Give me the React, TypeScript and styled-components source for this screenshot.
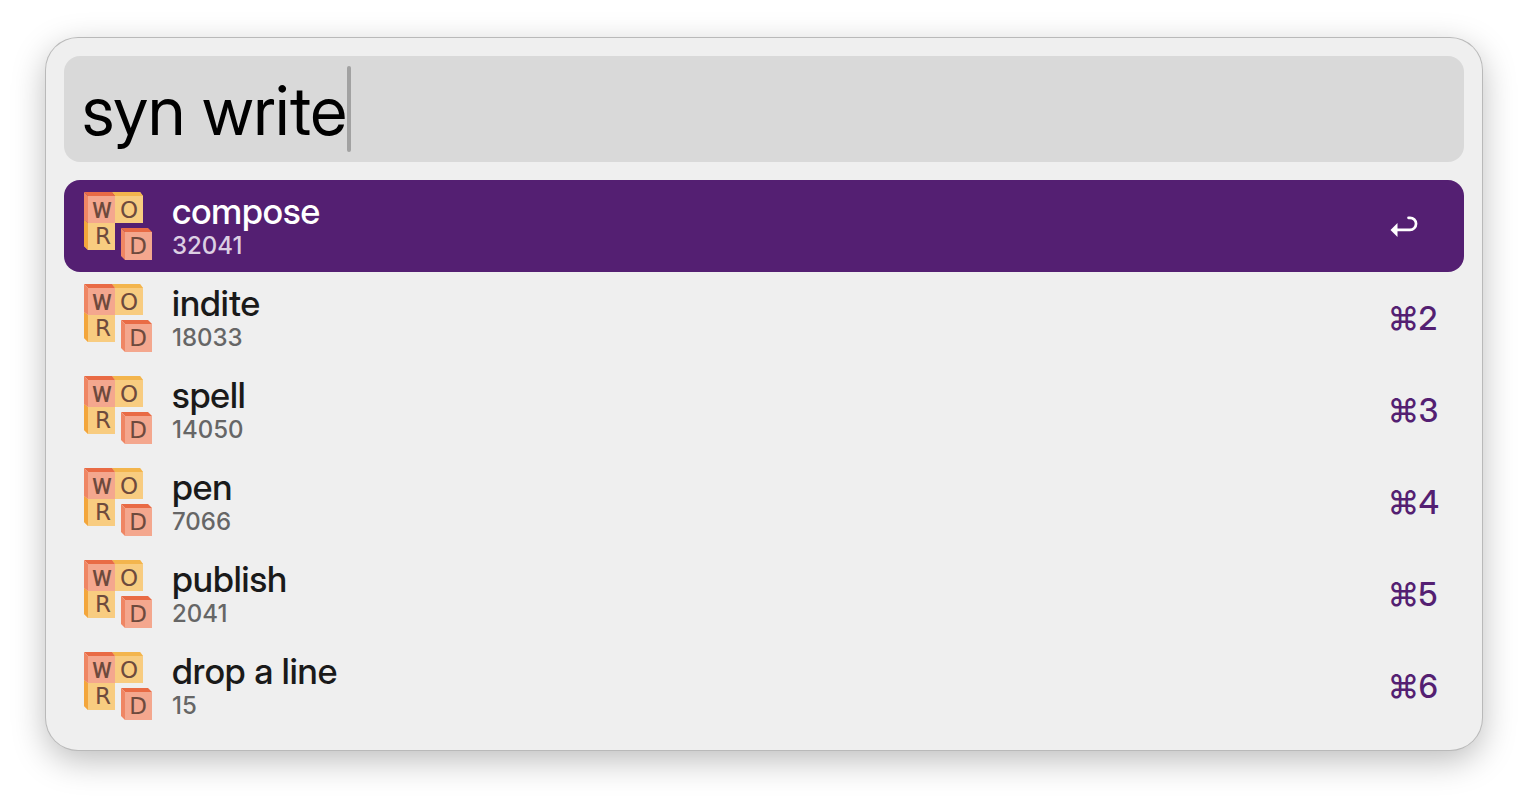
import React, { useState } from "react";
import styled, { createGlobalStyle } from "styled-components";

const GlobalStyle = createGlobalStyle`
  * { box-sizing: border-box; }
  body {
    margin: 0;
    background: #ffffff;
    font-family: "Inter Display", Inter, "Liberation Sans", sans-serif;
  }
`;

const Page = styled.main`
  padding: 38px 46px 54px;
`;

const Panel = styled.section`
  display: flex;
  flex-direction: column;
  gap: 18px;
  padding: 18px;
  border-radius: 32px;
  background: #efefef;
  box-shadow: 0 0 0 1px #b9b9b9, 0 10px 34px rgba(0, 0, 0, 0.27);
`;

const SearchBar = styled.div`
  display: flex;
  align-items: center;
  height: 106px;
  padding: 0 18px;
  border-radius: 16px;
  background: #d9d9d9;
`;

const SearchInput = styled.input`
  field-sizing: content;
  max-width: 100%;
  height: 88px;
  padding: 2px 0 0;
  border: 0;
  outline: 0;
  background: transparent;
  color: #000000;
  caret-color: transparent;
  font-family: inherit;
  font-size: 68px;
  font-weight: 400;
`;

const Caret = styled.span`
  width: 4px;
  height: 86px;
  border-radius: 2px;
  background: #a2a2a2;
`;

const Results = styled.ul`
  margin: 0;
  padding: 0;
  list-style: none;
`;

const ResultButton = styled.button<{ $selected: boolean }>`
  display: flex;
  align-items: center;
  gap: 20px;
  width: 100%;
  height: 92px;
  padding: 0 28px 0 20px;
  border: 0;
  border-radius: 16px;
  background: ${(p) => (p.$selected ? "#541f72" : "transparent")};
  color: ${(p) => (p.$selected ? "#ffffff" : "#1a1a1a")};
  font-family: inherit;
  text-align: left;
`;

const Labels = styled.span`
  display: flex;
  flex: 1;
  flex-direction: column;
`;

const Title = styled.span`
  font-size: 36px;
  font-weight: 500;
  line-height: 40px;
`;

const Subtitle = styled.span<{ $selected: boolean }>`
  color: ${(p) => (p.$selected ? "#dccfe3" : "#666666")};
  font-family: Inter, "Liberation Sans", sans-serif;
  font-size: 24px;
  font-weight: 450;
  line-height: 30px;
`;

const Shortcut = styled.span`
  display: flex;
  width: 48px;
  padding-top: 2px;
  color: #541f72;
  font-size: 32px;
  font-weight: 500;
  line-height: 40px;
`;

const Tiles = styled.svg`
  flex: none;
  width: 68px;
  height: 68px;
`;

function WordIcon() {
  return (
    <Tiles viewBox="0 0 68 68" aria-hidden="true">
      <path d="M28 0H56L59 4V31H31V4Z" fill="#f8cc80" />
      <path d="M28 0H56L59 4H31Z" fill="#f3b54d" />
      <path d="M0 28L4 31H31V58H4L0 54Z" fill="#f8cc80" />
      <path d="M0 28L4 31V58L0 54Z" fill="#f3a63c" />
      <path d="M4 4H31V31H4Z" fill="#f4a78e" />
      <path d="M0 0H28L31 4H4Z" fill="#e96b45" />
      <path d="M0 0L4 4V31L0 28Z" fill="#ef8664" />
      <path d="M41 40H68V68H41Z" fill="#f4a78e" />
      <path d="M37 36H64L68 40H41Z" fill="#e96b45" />
      <path d="M37 36L41 40V68L37 64Z" fill="#ef8664" />
      <g fill="#6e4a3d" fontFamily='"DejaVu Sans", sans-serif' textAnchor="middle">
        <text x="18" y="26" fontSize="22" fontWeight="500" fontFamily="Roboto, sans-serif">W</text>
        <text x="45" y="26" fontSize="23">O</text>
        <text x="19" y="52" fontSize="23">R</text>
        <text x="54" y="62" fontSize="23">D</text>
      </g>
    </Tiles>
  );
}

function ReturnIcon() {
  return (
    <svg width="30" height="22" viewBox="-2 0 30 22" aria-label="Return">
      <path d="M18.5 1.8H20A6 6 0 0 1 20 13.9H7" fill="none" stroke="#ffffff" strokeWidth="2.7" strokeLinecap="round" />
      <path d="M0.5 14L7.5 7V21Z" fill="#ffffff" />
    </svg>
  );
}

const synonyms = [
  { word: "compose", score: 32041 },
  { word: "indite", score: 18033 },
  { word: "spell", score: 14050 },
  { word: "pen", score: 7066 },
  { word: "publish", score: 2041 },
  { word: "drop a line", score: 15 },
];

export default function App() {
  const [query, setQuery] = useState("syn write");
  const [selected, setSelected] = useState(0);

  return (
    <Page>
      <GlobalStyle />
      <Panel>
        <SearchBar>
          <SearchInput
            aria-label="Search"
            value={query}
            spellCheck={false}
            onChange={(e) => setQuery(e.target.value)}
          />
          <Caret />
        </SearchBar>
        <Results>
          {synonyms.map(({ word, score }, i) => (
            <li key={word}>
              <ResultButton type="button" $selected={i === selected} onClick={() => setSelected(i)}>
                <WordIcon />
                <Labels>
                  <Title>{word}</Title>
                  <Subtitle $selected={i === selected}>{score}</Subtitle>
                </Labels>
                <Shortcut>{i === selected ? <ReturnIcon /> : `⌘${i + 1}`}</Shortcut>
              </ResultButton>
            </li>
          ))}
        </Results>
      </Panel>
    </Page>
  );
}
